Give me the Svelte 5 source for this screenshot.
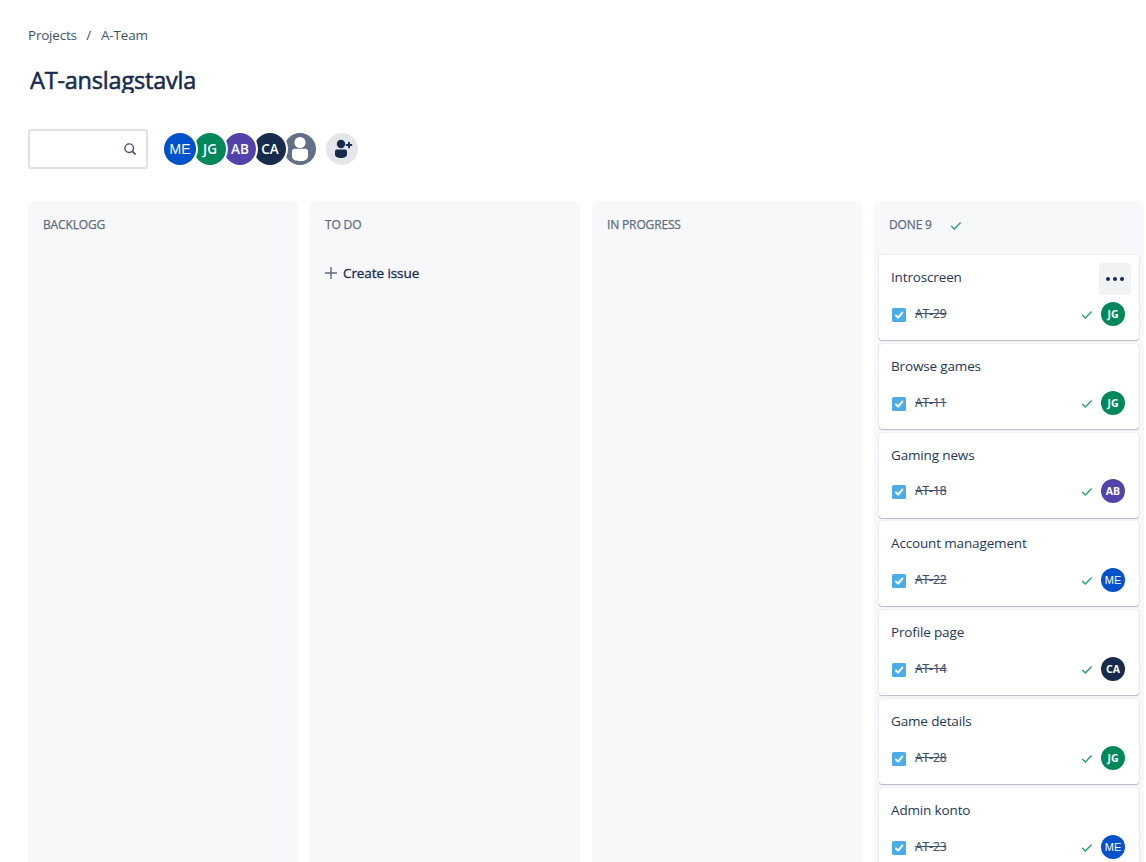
<script>
  const people = {
    ME: '#0052cc',
    JG: '#00875a',
    AB: '#5243aa',
    CA: '#172b4d'
  };
  const cards = [
    { title: 'Introscreen', key: 'AT-29', who: 'JG', menu: true },
    { title: 'Browse games', key: 'AT-11', who: 'JG' },
    { title: 'Gaming news', key: 'AT-18', who: 'AB' },
    { title: 'Account management', key: 'AT-22', who: 'ME' },
    { title: 'Profile page', key: 'AT-14', who: 'CA' },
    { title: 'Game details', key: 'AT-28', who: 'JG' },
    { title: 'Admin konto', key: 'AT-23', who: 'ME' }
  ];
  const columns = [
    { name: 'BACKLOGG' },
    { name: 'TO DO', create: true },
    { name: 'IN PROGRESS' },
    { name: 'DONE 9', done: true, cards }
  ];
</script>

{#snippet tick()}
  <svg class="tick" width="12" height="10" viewBox="0 0 12 10"><path d="M1.3 5 4.3 8 10.6 1.5" fill="none" stroke="#22a06b" stroke-width="1.3" /></svg>
{/snippet}

<main>
  <nav><span>Projects</span><span class="slash">/</span><span class="team">A-Team</span></nav>
  <h1>AT-anslagstavla</h1>
  <div class="tools">
    <div class="search">
      <svg width="14" height="14" viewBox="0 0 14 14" fill="none" stroke="#44546f"><circle cx="6.2" cy="6.2" r="4.3" stroke-width="1.4" /><path d="m9.4 9.4 2.7 2.7" stroke-width="1.6" stroke-linecap="round" /></svg>
    </div>
    <div class="people">
      {#each Object.entries(people) as [id, color], i}
        <div class="avatar" class:plain={id === 'ME'} style="background:{color};z-index:{9 - i}">{id}</div>
      {/each}
      <div class="avatar none">
        <svg width="32" height="32" viewBox="0 0 32 32" fill="#fff"><circle cx="16" cy="9.5" r="5.6" /><path d="M8 18.800a3 3 0 0 1 3-3h10a3 3 0 0 1 3 3v4.700c0 3-3.500 4.700-8 4.700s-8-1.700-8-4.700z" /></svg>
      </div>
    </div>
    <div class="add">
      <svg width="32" height="32" viewBox="0 0 32 32" fill="#172b4d"><circle cx="15" cy="11" r="4.2" /><path d="M9 18.200A1.700 1.700 0 0 1 10.700 16.500h8.600A1.700 1.700 0 0 1 21 18.200v3.300c0 2-2.500 3.500-6 3.500s-6-1.500-6-3.500z" /><path d="M23 9.600v4.800M20.600 12h4.800" stroke="#172b4d" stroke-width="1.9" stroke-linecap="round" /></svg>
    </div>
  </div>
  <div class="board">
    {#each columns as col}
      <section>
        <h2>{col.name}{#if col.done}{@render tick()}{/if}</h2>
        {#if col.create}
          <div class="create">
            <svg width="12" height="12" viewBox="0 0 12 12"><path d="M6 0v12M0 6h12" stroke="#5e6c84" stroke-width="1.4" /></svg>
            <span>Create issue</span>
          </div>
        {/if}
        {#if col.cards}
          <div class="cards">
            {#each col.cards as card}
              <article>
                <div class="title">{card.title}</div>
                <div class="meta">
                  <svg class="box" width="14" height="14" viewBox="0 0 14 14"><rect width="14" height="14" rx="1.5" fill="#4bade8" /><path d="m3.900 7.500 2.200 2.100 4.200-5" fill="none" stroke="#fff" stroke-width="2" stroke-linecap="round" stroke-linejoin="round" /></svg>
                  <span class="key">{card.key}</span>
                  {@render tick()}
                  <div class="small" class:plain={card.who === 'ME'} style="background:{people[card.who]}">{card.who}</div>
                </div>
                {#if card.menu}
                  <div class="menu"><i></i><i></i><i></i></div>
                {/if}
              </article>
            {/each}
          </div>
        {/if}
      </section>
    {/each}
  </div>
</main>

<style>
  :global(body) { margin: 0; background: #fff; overflow: hidden; }
  main {
    box-sizing: border-box;
    width: 1146px;
    height: 862px;
    padding: 25px 2px 0 28px;
    overflow: hidden;
    display: flex;
    flex-direction: column;
    font-family: "Open Sans", "Noto Sans", sans-serif;
    color: #172b4d;
  }
  svg { display: block; flex: none; }
  nav { display: flex; height: 20px; font-size: 13.5px; line-height: 20px; color: #42526e; letter-spacing: -0.22px; }
  .slash { margin: 0 10px 0 9.5px; }
  .team { letter-spacing: -0.15px; }
  h1 { margin: 22px 0 0 2px; height: 26px; overflow: hidden; font-size: 23.5px; font-weight: 400; -webkit-text-stroke: 0.55px #172b4d; line-height: 27px; letter-spacing: -0.2px; white-space: nowrap; }
  .tools { display: flex; align-items: center; height: 40px; margin-top: 36px; }
  .search { box-sizing: border-box; width: 120px; height: 40px; border: 2px solid #dfe1e6; border-radius: 3px; display: flex; align-items: center; justify-content: flex-end; padding-right: 9px; }
  .people { display: flex; margin-left: 16px; }
  .avatar { position: relative; width: 32px; height: 32px; margin-right: -2px; border-radius: 50%; box-shadow: 0 0 0 2px #fff; color: #fff; font-size: 13.5px; font-weight: 600; line-height: 32px; text-align: center; }
  .avatar.plain { font-family: "Liberation Sans", Arial, sans-serif; font-size: 14px; font-weight: 400; }
  .none { background: #626f86; overflow: hidden; }
  .add { width: 32px; height: 32px; margin-left: 12px; border-radius: 50%; background: #e4e6ea; }
  .board { display: grid; grid-template-columns: repeat(4, 270px); gap: 12px; margin-top: 32px; height: 661px; }
  section { background: #f7f8fa; border-radius: 6px 6px 0 0; height: 661px; overflow: hidden; }
  h2 { display: flex; align-items: center; margin: 0; height: 47px; padding-left: 15px; font-size: 12px; font-weight: 400; -webkit-text-stroke: 0.25px #5e6c84; color: #5e6c84; letter-spacing: -0.15px; white-space: nowrap; }
  h2 .tick { margin-left: 18.5px; margin-top: 2px; }
  .create { display: flex; align-items: center; gap: 6px; padding: 15px 0 0 15px; height: 20px; font-size: 13.5px; -webkit-text-stroke: 0.3px #172b4d; letter-spacing: -0.08px; line-height: 20px; }
  .cards { display: flex; flex-direction: column; gap: 3.8px; padding: 7px 5px 0; }
  article { position: relative; box-sizing: border-box; height: 85px; flex: none; padding: 12px 14px 0 12px; background: #fff; border-radius: 3px; box-shadow: 0 1px 1px rgba(9, 30, 66, .25), 0 0 1px rgba(9, 30, 66, .31); }
  .title { height: 20px; line-height: 20px; font-size: 13.5px; letter-spacing: -0.15px; color: #253858; white-space: nowrap; }
  .meta { display: flex; align-items: center; height: 24px; margin-top: 14.8px; }
  .box { margin: 2px 9px 0 1px; }
  .key { flex: 1; font-size: 12px; line-height: 20px; color: #42526e; -webkit-text-stroke: 0.2px #42526e; text-decoration: line-through; letter-spacing: -0.05px; }
  .meta .tick { margin: 2px 8px 0 0; }
  .small { width: 24px; height: 24px; border-radius: 50%; color: #fff; font-size: 10.5px; font-weight: 700; line-height: 24px; text-align: center; }
  .small.plain { font-family: "Liberation Sans", Arial, sans-serif; font-size: 11px; font-weight: 400; }
  .menu { position: absolute; top: 8px; right: 8px; width: 32px; height: 32px; border-radius: 3px; background: #f1f2f4; display: flex; align-items: center; justify-content: center; gap: 3px; }
  .menu i { width: 4px; height: 4px; border-radius: 50%; background: #172b4d; }
</style>
